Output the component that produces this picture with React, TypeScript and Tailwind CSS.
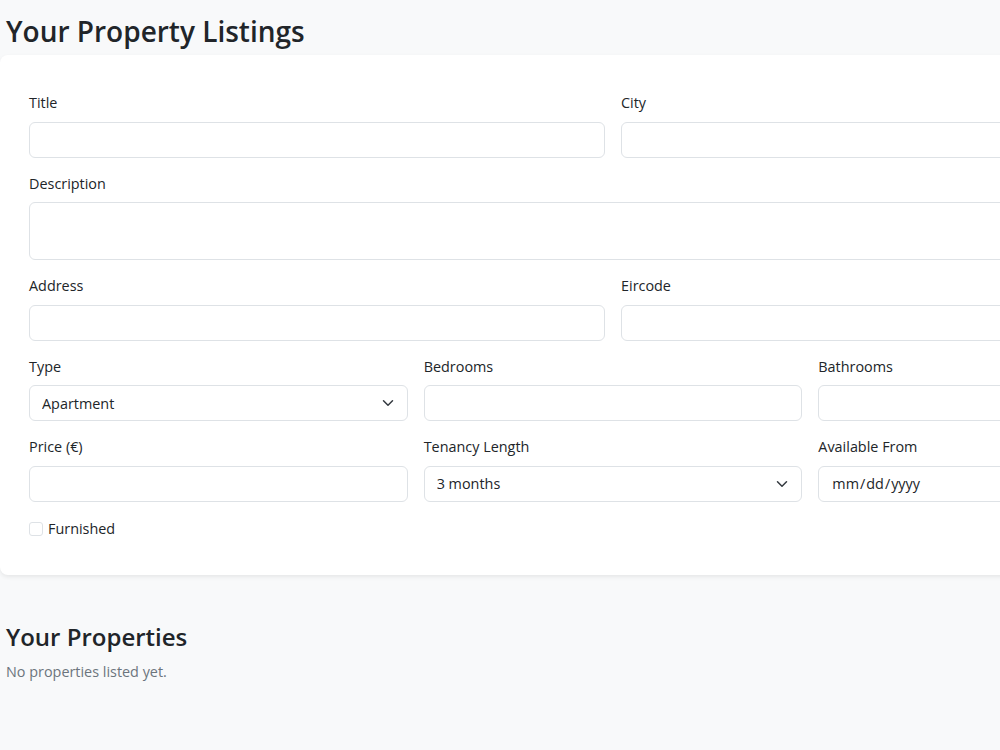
import React from 'react';

const font = { fontFamily: '"Segoe UI", "Open Sans", "Noto Sans", sans-serif' };

const inputCls =
  'block w-full h-[36px] rounded-[6px] border border-[#dee2e6] bg-white px-3 text-[14.4px] text-[#212529] outline-none';

function Field({ label, children }: { label: string; children: React.ReactNode }) {
  return (
    <div className="mb-4">
      <label className="mb-2 block text-[14.4px] leading-[20.6px] text-[#212529]">{label}</label>
      {children}
    </div>
  );
}

function Chevron() {
  return (
    <svg
      className="pointer-events-none absolute right-[12px] top-1/2 -translate-y-1/2"
      width="16"
      height="12"
      viewBox="0 0 16 16"
    >
      <path d="m2 5 6 6 6-6" fill="none" stroke="#343a40" strokeWidth="2" strokeLinecap="round" strokeLinejoin="round" />
    </svg>
  );
}

function Select({ options }: { options: string[] }) {
  return (
    <div className="relative">
      <select className={inputCls + ' appearance-none pr-9'} style={font} defaultValue={options[0]}>
        {options.map((o) => (
          <option key={o}>{o}</option>
        ))}
      </select>
      <Chevron />
    </div>
  );
}

export default function App() {
  return (
    <div className="min-h-screen w-full overflow-hidden bg-[#f8f9fa] text-[#212529]" style={font}>
      <h2 className="px-[6px] pt-[13px] mb-[6px] text-[28px] leading-[36px] font-semibold">Your Property Listings</h2>

      <div className="w-[1226px] rounded-[8px] bg-white px-[29px] pt-[38px] pb-[35px] shadow-[0_2px_4px_rgba(0,0,0,0.075)]">
        <div className="grid grid-cols-2 gap-x-4">
          <Field label="Title">
            <input className={inputCls} />
          </Field>
          <Field label="City">
            <input className={inputCls} />
          </Field>
        </div>

        <Field label="Description">
          <textarea rows={2} className={inputCls + ' h-[58px] resize-none py-[6px] leading-[21.6px]'} />
        </Field>

        <div className="grid grid-cols-2 gap-x-4">
          <Field label="Address">
            <input className={inputCls} />
          </Field>
          <Field label="Eircode">
            <input className={inputCls} />
          </Field>
        </div>

        <div className="grid grid-cols-3 gap-x-4">
          <Field label="Type">
            <Select options={['Apartment', 'House', 'Studio', 'Room']} />
          </Field>
          <Field label="Bedrooms">
            <input type="number" className={inputCls} />
          </Field>
          <Field label="Bathrooms">
            <input type="number" className={inputCls} />
          </Field>
          <Field label="Price (€)">
            <input type="number" className={inputCls} />
          </Field>
          <Field label="Tenancy Length">
            <Select options={['3 months', '6 months', '12 months']} />
          </Field>
          <Field label="Available From">
            <input type="date" className={inputCls} style={font} />
          </Field>
        </div>

        <label className="flex items-center gap-[5px] text-[14.4px] leading-[22px]">
          <span className="block h-[14px] w-[14px] rounded-[3px] border border-[#dee2e6] bg-white" />
          Furnished
        </label>
      </div>

      <h3 className="mt-[46px] mb-2 px-[6px] text-[24px] leading-[32px] font-semibold">Your Properties</h3>
      <p className="px-[6px] text-[14.4px] leading-[21.6px] text-[#6c757d]">No properties listed yet.</p>
    </div>
  );
}
